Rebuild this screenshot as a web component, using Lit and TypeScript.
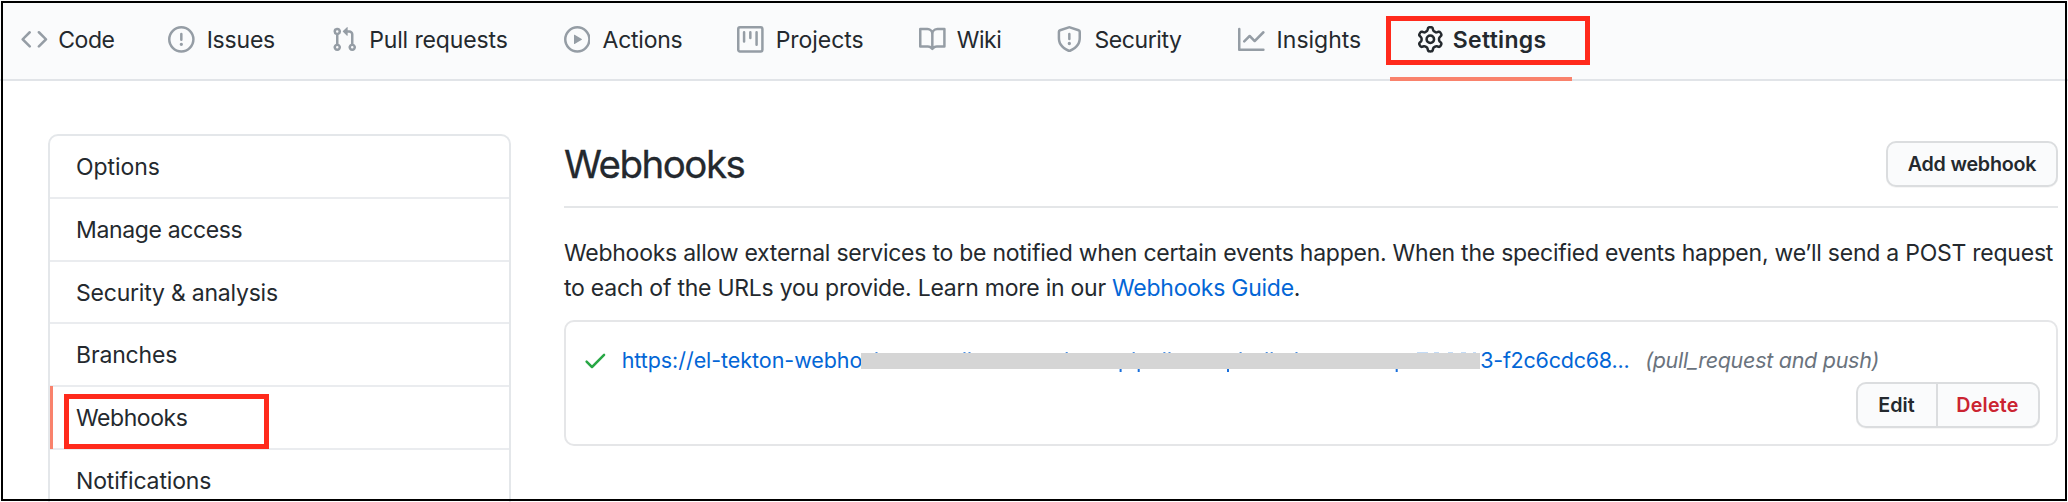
import {LitElement, html, css, svg} from "lit";
import {customElement} from "lit/decorators.js";
import {classMap} from "lit/directives/class-map.js";
import {styleMap} from "lit/directives/style-map.js";

const ICONS: Record<string, string> = {
  code: "M4.72 3.22a.75.75 0 011.06 1.06L2.06 8l3.72 3.72a.75.75 0 11-1.06 1.06L.47 8.53a.75.75 0 010-1.06l4.25-4.25zm6.56 0a.75.75 0 10-1.06 1.06L13.94 8l-3.72 3.72a.75.75 0 101.06 1.06l4.25-4.25a.75.75 0 000-1.06l-4.25-4.25z",
  issue: "M8 1.5a6.5 6.5 0 100 13 6.5 6.5 0 000-13zM0 8a8 8 0 1116 0A8 8 0 010 8zm9 3a1 1 0 11-2 0 1 1 0 012 0zm-.25-6.25a.75.75 0 00-1.5 0v3.5a.75.75 0 001.5 0v-3.5z",
  pull: "M7.177 3.073L9.573.677A.25.25 0 0110 .854v4.792a.25.25 0 01-.427.177L7.177 3.427a.25.25 0 010-.354zM3.75 2.5a.75.75 0 100 1.5.75.75 0 000-1.5zm-2.25.75a2.25 2.25 0 113 2.122v5.256a2.251 2.251 0 11-1.5 0V5.372A2.25 2.25 0 011.5 3.25zM11 2.5h-1V4h1a1 1 0 011 1v5.628a2.251 2.251 0 101.5 0V5A2.5 2.5 0 0011 2.5zm1 10.25a.75.75 0 111.5 0 .75.75 0 01-1.5 0zM3.75 12a.75.75 0 100 1.5.75.75 0 000-1.5z",
  play: "M1.5 8a6.5 6.5 0 1113 0 6.5 6.5 0 01-13 0zM8 0a8 8 0 100 16A8 8 0 008 0zM6.379 5.227A.25.25 0 006 5.442v5.117a.25.25 0 00.379.214l4.264-2.559a.25.25 0 000-.428L6.379 5.227z",
  project: "M1.75 0A1.75 1.75 0 000 1.75v12.5C0 15.216.784 16 1.75 16h12.5A1.75 1.75 0 0016 14.25V1.75A1.75 1.75 0 0014.25 0H1.75zM1.5 1.75a.25.25 0 01.25-.25h12.5a.25.25 0 01.25.25v12.5a.25.25 0 01-.25.25H1.75a.25.25 0 01-.25-.25V1.75zM11.75 3a.75.75 0 00-.75.75v7.5a.75.75 0 001.5 0v-7.5a.75.75 0 00-.75-.75zm-8.25.75a.75.75 0 011.5 0v5.5a.75.75 0 01-1.5 0v-5.5zM8 3a.75.75 0 00-.75.75v3.5a.75.75 0 001.5 0v-3.5A.75.75 0 008 3z",
  book: "M0 1.75A.75.75 0 01.75 1h4.253c1.227 0 2.317.59 3 1.501A3.744 3.744 0 0111.006 1h4.245a.75.75 0 01.75.75v10.5a.75.75 0 01-.75.75h-4.507a2.25 2.25 0 00-1.591.659l-.622.621a.75.75 0 01-1.06 0l-.622-.621A2.25 2.25 0 005.258 13H.75a.75.75 0 01-.75-.75V1.75zm8.755 3a2.25 2.25 0 012.25-2.25H14.5v9h-3.757c-.71 0-1.4.201-1.992.572l.004-7.322zm-1.504 7.324l.004-5.073-.002-2.253A2.25 2.25 0 005.003 2.5H1.5v9h3.757a3.75 3.75 0 011.994.574z",
  shield: "M7.467.133a1.75 1.75 0 011.066 0l5.25 1.68A1.75 1.75 0 0115 3.48V7c0 1.566-.32 3.182-1.303 4.682-.983 1.498-2.585 2.813-5.032 3.855a1.7 1.7 0 01-1.33 0c-2.447-1.042-4.049-2.357-5.032-3.855C1.32 10.182 1 8.566 1 7V3.48a1.75 1.75 0 011.217-1.667l5.25-1.68zm.61 1.429a.25.25 0 00-.153 0l-5.25 1.68a.25.25 0 00-.174.238V7c0 1.358.275 2.666 1.057 3.86.784 1.194 2.121 2.34 4.366 3.297a.2.2 0 00.154 0c2.245-.956 3.582-2.104 4.366-3.298C13.225 9.666 13.5 8.36 13.5 7V3.48a.25.25 0 00-.174-.237l-5.25-1.68zM9 10.5a1 1 0 11-2 0 1 1 0 012 0zm-.25-5.75a.75.75 0 10-1.5 0v3a.75.75 0 001.5 0v-3z",
  graph: "M1.5 1.75a.75.75 0 00-1.5 0v12.5c0 .414.336.75.75.75h14.5a.75.75 0 000-1.5H1.5V1.75zm14.28 2.53a.75.75 0 00-1.06-1.06L10 7.94 7.53 5.47a.75.75 0 00-1.06 0L3.22 8.72a.75.75 0 001.06 1.06L7 7.06l2.47 2.47a.75.75 0 001.06 0l5.25-5.25z",
  gear: "M7.429 1.525a6.593 6.593 0 011.142 0c.036.003.108.036.137.146l.289 1.105c.147.56.55.967.997 1.189.174.086.341.183.501.29.417.278.97.423 1.53.27l1.102-.303c.11-.03.175.016.195.046.219.31.41.641.573.989.014.031.022.11-.059.19l-.815.806c-.411.406-.562.957-.53 1.456a4.588 4.588 0 010 .582c-.032.499.119 1.05.53 1.456l.815.806c.08.08.073.159.059.19a6.494 6.494 0 01-.573.99c-.02.029-.086.074-.195.045l-1.103-.303c-.559-.153-1.112-.008-1.529.27-.16.107-.327.204-.5.29-.449.222-.851.628-.998 1.189l-.289 1.105c-.029.11-.101.143-.137.146a6.613 6.613 0 01-1.142 0c-.036-.003-.108-.037-.137-.146l-.289-1.105c-.147-.56-.55-.967-.997-1.189a4.502 4.502 0 01-.501-.29c-.417-.278-.97-.423-1.53-.27l-1.102.303c-.11.03-.175-.016-.195-.046a6.492 6.492 0 01-.573-.989c-.014-.031-.022-.11.059-.19l.815-.806c.411-.406.562-.957.53-1.456a4.587 4.587 0 010-.582c.032-.499-.119-1.05-.53-1.456l-.815-.806c-.08-.08-.073-.159-.059-.19a6.44 6.44 0 01.573-.99c.02-.029.086-.075.195-.045l1.103.303c.559.153 1.112.008 1.529-.27.16-.107.327-.204.5-.29.449-.222.851-.628.998-1.189l.289-1.105c.029-.11.101-.143.137-.146zM8 0c-.236 0-.47.01-.701.03-.743.065-1.29.615-1.458 1.261l-.29 1.106c-.017.066-.078.158-.211.224a5.994 5.994 0 00-.668.386c-.123.082-.233.09-.3.071L3.27 2.776c-.644-.177-1.392.02-1.82.63a7.977 7.977 0 00-.704 1.217c-.315.675-.111 1.422.363 1.891l.815.806c.05.048.098.147.088.294a6.084 6.084 0 000 .772c.01.147-.038.246-.088.294l-.815.806c-.474.469-.678 1.216-.363 1.891.2.428.436.835.704 1.218.428.609 1.176.806 1.82.63l1.103-.303c.066-.019.176-.011.299.071.213.143.436.272.668.386.133.066.194.158.212.224l.289 1.106c.169.646.715 1.196 1.458 1.26a8.094 8.094 0 001.402 0c.743-.064 1.29-.614 1.458-1.26l.29-1.106c.017-.066.078-.158.211-.224a5.98 5.98 0 00.668-.386c.123-.082.233-.09.3-.071l1.102.302c.644.177 1.392-.02 1.82-.63.268-.382.505-.789.704-1.217.315-.675.111-1.422-.364-1.891l-.814-.806c-.05-.048-.098-.147-.088-.294a6.1 6.1 0 000-.772c-.01-.147.039-.246.088-.294l.814-.806c.475-.469.679-1.216.364-1.891a7.992 7.992 0 00-.704-1.218c-.428-.609-1.176-.806-1.82-.63l-1.103.303c-.066.019-.176.011-.299-.071a5.991 5.991 0 00-.668-.386c-.133-.066-.194-.158-.212-.224L10.16 1.29C9.99.645 9.444.095 8.701.031A8.094 8.094 0 008 0zm1.5 8a1.5 1.5 0 11-3 0 1.5 1.5 0 013 0zM11 8a3 3 0 11-6 0 3 3 0 016 0z",
  check: "M13.78 4.22a.75.75 0 010 1.06l-7.25 7.25a.75.75 0 01-1.06 0L2.22 9.28a.75.75 0 011.06-1.06L6 10.94l6.72-6.72a.75.75 0 011.06 0z",
};

const icon = (name: string) => html`<svg class="icon" viewBox="0 0 16 16" aria-hidden="true"><path fill-rule="evenodd" d=${ICONS[name]}></path></svg>`;

interface Tab { icon: string; label: string; width: number; gap: number; track: number; selected?: boolean }

const TABS: Tab[] = [
  {icon: "code", label: "Code", width: 147, gap: 10.2, track: -0.4},
  {icon: "issue", label: "Issues", width: 163, gap: 11.7, track: -0.2},
  {icon: "pull", label: "Pull requests", width: 232.4, gap: 11.2, track: -0.13},
  {icon: "play", label: "Actions", width: 173.6, gap: 12.2, track: -0.25},
  {icon: "project", label: "Projects", width: 181.7, gap: 11.7, track: -0.04},
  {icon: "book", label: "Wiki", width: 137.2, gap: 11.2, track: -0.5},
  {icon: "shield", label: "Security", width: 181.8, gap: 11.6, track: -0.42},
  {icon: "graph", label: "Insights", width: 178.7, gap: 12, track: 0},
  {icon: "gear", label: "Settings", width: 130, gap: 9.5, track: 0.3, selected: true},
];

const MENU: {label: string; track: number; selected?: boolean}[] = [
  {label: "Options", track: -0.05},
  {label: "Manage access", track: -0.36},
  {label: "Security & analysis", track: -0.22},
  {label: "Branches", track: -0.15},
  {label: "Webhooks", track: -0.45, selected: true},
  {label: "Notifications", track: -0.15},
];

// Letter strokes that stick out above and below the redaction bar.
const ASCENDERS = [14.5, 102.5, 107.5, 204.7, 271.7, 302.4, 307.5, 378.6, 404.7, 409.7, 434.5];
const DESCENDERS = [258.6, 276.7, 366, 534.7];
const DIGITS = [[556, 11], [573, 5], [587, 5], [600, 5], [612, 3]];

@customElement("app-root")
export class AppRoot extends LitElement {
  static styles = css`
    :host { display: block; position: relative; width: 2068px; height: 502px; overflow: hidden; background: #fff;
      color: #24292e; font: 400 23px/1.5 Inter, "Liberation Sans", sans-serif; }
    * { box-sizing: border-box; }
    a { color: #0366d6; text-decoration: none; }
    .frame { position: absolute; inset: 1px; border: 2px solid #000; pointer-events: none; }
    .icon { width: 26.67px; height: 26.67px; flex: none; fill: #959da5; display: block; }
    .tabs { display: flex; height: 81px; padding-left: 21.3px; background: #fafbfc; border-bottom: 2px solid #e1e4e8; }
    .tab { position: relative; display: flex; align-items: center; flex: none; height: 79px; white-space: nowrap; }
    .tab span { padding-top: 2px; }
    .tab.selected { font-weight: 600; }
    .tab.selected .icon { fill: #24292e; }
    .tab.selected::after { content: ""; position: absolute; left: -26.7px; width: 182px; bottom: -2px; height: 4px; background: #f9826c; }
    .mark { position: absolute; border: 5px solid #ff2a1c; pointer-events: none; }
    .tab .mark { left: -31px; top: 16px; width: 204px; height: 49px; }
    .item .mark { left: 14px; top: 7px; width: 205px; height: 55px; }
    .body { display: flex; align-items: flex-start; padding: 53px 10px 0 48px; }
    .menu { width: 463px; flex: none; border: 2px solid #e4e7ea; border-radius: 10px; }
    .item { position: relative; height: 62.75px; padding-left: 26px; line-height: 63px; border-bottom: 2px solid #eaecef; }
    .item.selected::before { content: ""; position: absolute; left: 0; top: -1px; bottom: -1px; width: 3px; background: #f9826c; }
    .main { flex: 1; margin-left: 53px; }
    .head { display: flex; justify-content: space-between; align-items: flex-start; height: 74px; border-bottom: 2px solid #e4e6e8; }
    h2 { margin: 0; font-size: 38.5px; font-weight: 400; line-height: 60.6px; letter-spacing: -1.5px; -webkit-text-stroke: 0.3px; }
    .btn { font: 600 19.7px/42px Inter, "Liberation Sans", sans-serif; letter-spacing: -0.22px; color: #24292e; background: #fafbfc;
      border: 2px solid #dbdddf; border-radius: 10px; height: 46px; padding: 0; text-align: center; box-shadow: 0 1px 0 rgba(27, 31, 35, .04); }
    .add { width: 172px; margin-top: 6.5px; }
    p { margin: 28px 0 15px; line-height: 34.5px; letter-spacing: -0.246px; white-space: nowrap; }
    .hook { height: 126px; border: 2px solid #e5e6e8; border-radius: 10px; padding: 20px 16.5px 0 16px; }
    .row { display: flex; align-items: center; height: 36px; line-height: 36px; font-size: 21.5px; white-space: nowrap; }
    .row .icon { fill: #28a745; margin-right: 13px; }
    .url { display: flex; align-items: center; letter-spacing: -0.06px; }
    .start { width: 239.5px; }
    .redact { display: block; width: 619px; height: 16px; margin-top: 2px; overflow: visible; }
    .end { width: 165px; padding-left: 0; letter-spacing: -0.22px; }
    .events { font-style: italic; color: #6a737d; letter-spacing: -0.28px; }
    .actions { display: flex; justify-content: flex-end; margin-top: 4px; }
    .edit { width: 80px; border-radius: 10px 0 0 10px; border-right: 0; letter-spacing: 0; }
    .delete { width: 104px; border-radius: 0 10px 10px 0; color: #cb2431; letter-spacing: 0.2px; }
  `;

  private tab(t: Tab) {
    return html`<div class=${classMap({tab: true, selected: !!t.selected})}
      style=${styleMap({width: `${t.width}px`, gap: `${t.gap}px`, letterSpacing: `${t.track}px`})}>
      ${icon(t.icon)}<span>${t.label}</span>${t.selected ? html`<i class="mark"></i>` : null}</div>`;
  }

  render() {
    return html`
      <nav class="tabs">${TABS.map(t => this.tab(t))}</nav>
      <div class="body">
        <aside class="menu">
          ${MENU.map(m => html`<div class=${classMap({item: true, selected: !!m.selected})} style=${styleMap({letterSpacing: `${m.track}px`})}>
            ${m.label}${m.selected ? html`<i class="mark"></i>` : null}</div>`)}
        </aside>
        <main class="main">
          <div class="head"><h2>Webhooks</h2><button class="btn add">Add webhook</button></div>
          <p>Webhooks allow external services to be notified when certain events happen. When the specified events happen, we’ll send a POST request<br>to each of the URLs you provide. Learn more in our <a>Webhooks Guide</a>.</p>
          <section class="hook">
            <div class="row">
              ${icon("check")}
              <a class="url">
                <span class="start">https://el-tekton-webho</span>
                <svg class="redact" viewBox="0 0 619 16">
                  ${ASCENDERS.map(x => svg`<rect x=${x} y="-1" width="2" height="2" fill="#4a8fe2"></rect>`)}
                  ${DIGITS.map(([x, w]) => svg`<rect x=${x} y="-1" width=${w} height="1" fill="#c3dbf6"></rect>`)}
                  ${DESCENDERS.map(x => svg`<rect x=${x} y="15" width="2" height="4" fill="#1a6fdb"></rect>`)}
                  <rect width="619" height="16" fill="#d5d5d5"></rect>
                </svg>
                <span class="end">3-f2c6cdc68...</span>
              </a>
              <span class="events">(pull_request and push)</span>
            </div>
            <div class="actions"><button class="btn edit">Edit</button><button class="btn delete">Delete</button></div>
          </section>
        </main>
      </div>
      <div class="frame"></div>`;
  }
}
